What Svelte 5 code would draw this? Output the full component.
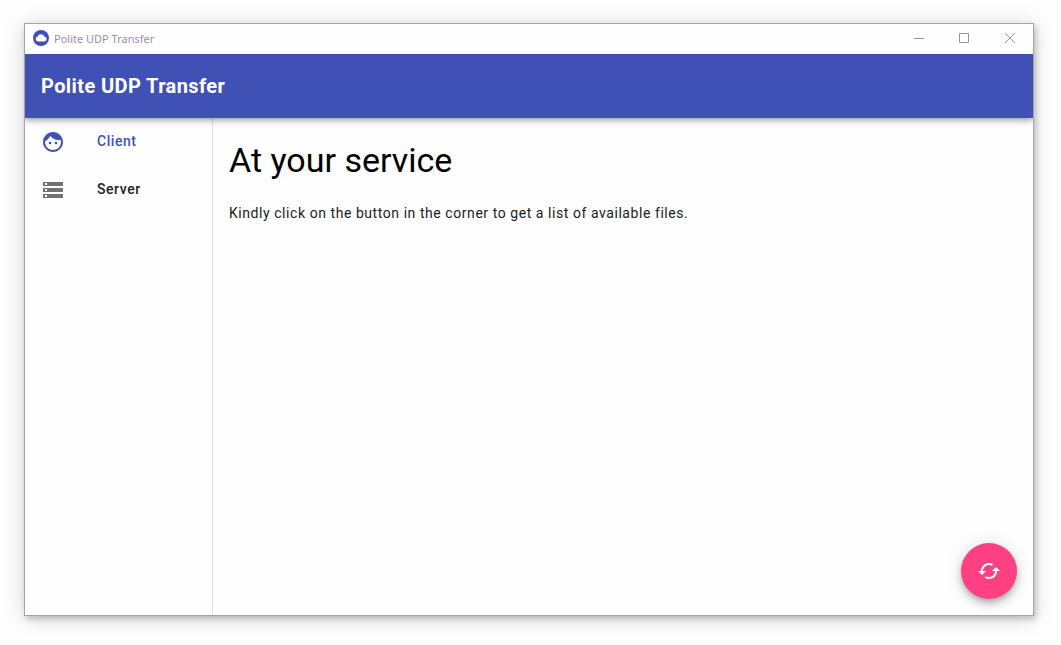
<script>
  let selected = $state('Client');

  const items = [
    {
      name: 'Client',
      icon: 'M9 11.75c-.69 0-1.25.56-1.25 1.25s.56 1.25 1.25 1.25 1.25-.56 1.25-1.25-.56-1.25-1.25-1.25zm6 0c-.69 0-1.25.56-1.25 1.25s.56 1.25 1.25 1.25 1.25-.56 1.25-1.25-.56-1.25-1.25-1.25zM12 2C6.48 2 2 6.48 2 12s4.48 10 10 10 10-4.48 10-10S17.52 2 12 2zm0 18c-4.41 0-8-3.59-8-8 0-.29.02-.58.05-.86 2.36-1.05 4.23-2.98 5.21-5.37C11.07 8.33 14.05 10 17.42 10c.78 0 1.53-.09 2.25-.26.21.71.33 1.47.33 2.26 0 4.41-3.59 8-8 8z',
    },
    {
      name: 'Server',
      icon: 'M2 20h20v-4H2v4zm2-3h2v2H4v-2zM2 4v4h20V4H2zm4 3H4V5h2v2zm-4 7h20v-4H2v4zm2-3h2v2H4v-2z',
    },
  ];
</script>

<div class="desktop">
  <div class="window">
    <div class="titlebar">
      <svg class="logo" viewBox="0 0 16 16" aria-hidden="true">
        <circle cx="8" cy="8" r="8" fill="#3f51b5" />
        <path fill="#fff" d="M5 11.5a2.6 2.6 0 0 1-.4-5.1A3.8 3.8 0 0 1 11.6 6.8a2.4 2.4 0 0 1 .1 4.7z" />
      </svg>
      <span class="caption">Polite UDP Transfer</span>
      <button class="control" aria-label="Minimize">
        <svg viewBox="0 0 10 10"><path d="M1 4.5h10" /></svg>
      </button>
      <button class="control" aria-label="Maximize">
        <svg viewBox="0 0 10 10"><path d="M.5 -.5h9v9h-9z" /></svg>
      </button>
      <button class="control" aria-label="Close">
        <svg viewBox="0 0 10 10"><path d="M0 -1l10 10M10 -1L0 9" /></svg>
      </button>
    </div>

    <header class="appbar">
      <span class="brand">Polite UDP Transfer</span>
    </header>

    <div class="body">
      <nav class="drawer">
        {#each items as item}
          <button
            class="item"
            class:active={selected === item.name}
            aria-pressed={selected === item.name}
            onclick={() => (selected = item.name)}
          >
            <svg class="icon" viewBox="0 0 24 24" aria-hidden="true"><path d={item.icon} /></svg>
            <span class="label">{item.name}</span>
          </button>
        {/each}
      </nav>

      <main class="content">
        <h1>At your service</h1>
        <p>Kindly click on the button in the corner to get a list of available files.</p>
        <button class="fab" aria-label="Refresh file list">
          <svg class="icon" viewBox="0 0 24 24" aria-hidden="true">
            <path d="M19 8l-4 4h3c0 3.31-2.69 6-6 6-1.01 0-1.97-.25-2.8-.7l-1.46 1.46C8.97 19.54 10.43 20 12 20c4.42 0 8-3.58 8-8h3l-4-4zM6 12c0-3.31 2.69-6 6-6 1.01 0 1.97.25 2.8.7l1.46-1.46C15.03 4.46 13.57 4 12 4c-4.42 0-8 3.58-8 8H1l4 4 4-4H6z" />
          </svg>
        </button>
      </main>
    </div>
  </div>
</div>

<style>
  :global(body) {
    background: #fefefe;
  }

  .desktop {
    box-sizing: border-box;
    display: flex;
    min-height: 100vh;
    padding: 23px 27px 29px 24px;
    font-family: Roboto, sans-serif;
  }

  .window {
    flex: 1;
    display: flex;
    flex-direction: column;
    background: #fefefe;
    border: 1px solid #a5a5a5;
    box-shadow:
      0 2px 20px rgba(0, 0, 0, 0.16),
      2px 3px 6px rgba(0, 0, 0, 0.2);
  }

  button {
    border: 0;
    padding: 0;
    background: none;
    font: inherit;
    cursor: pointer;
  }

  .titlebar {
    display: flex;
    align-items: center;
    height: 30px;
    padding-left: 8px;
  }

  .logo {
    width: 16px;
    height: 16px;
    margin-bottom: 2px;
  }

  .caption {
    flex: 1;
    margin-left: 5px;
    font: 11px/16px 'Noto Sans', sans-serif;
    color: #9b90a2;
  }

  .control {
    display: flex;
    align-items: center;
    justify-content: center;
    width: 46px;
    height: 28px;
  }

  .control svg {
    width: 10px;
    height: 10px;
    overflow: visible;
    fill: none;
    stroke: #969599;
    stroke-width: 1;
  }

  .appbar {
    position: relative;
    z-index: 1;
    display: flex;
    align-items: center;
    height: 64px;
    padding: 0 16px;
    background: #3f51b5;
    color: #fff;
    box-shadow:
      0 2px 4px -1px rgba(0, 0, 0, 0.2),
      0 4px 5px 0 rgba(0, 0, 0, 0.14),
      0 1px 10px 0 rgba(0, 0, 0, 0.12);
    clip-path: inset(0 0 -16px 0);
  }

  .brand {
    font-size: 20px;
    line-height: 32px;
    font-weight: 700;
    letter-spacing: 0.02em;
  }

  .body {
    flex: 1;
    display: flex;
  }

  .drawer {
    box-sizing: border-box;
    width: 188px;
    border-right: 1px solid #e0e0e0;
  }

  .item {
    display: flex;
    align-items: center;
    gap: 32px;
    width: 100%;
    height: 48px;
    padding: 0 16px;
    font-size: 14px;
    line-height: 20px;
    font-weight: 500;
    letter-spacing: 0.04em;
    color: #212121;
  }

  .label {
    padding-bottom: 2px;
  }

  .icon {
    width: 24px;
    height: 24px;
    fill: currentColor;
  }

  .item .icon {
    fill: #727272;
  }

  .item.active,
  .item.active .icon {
    color: #3f51b5;
    fill: #3f51b5;
  }

  .content {
    position: relative;
    flex: 1;
    padding: 22px 16px;
  }

  h1 {
    margin: 0;
    font-size: 34px;
    line-height: 40px;
    font-weight: 400;
    color: #000;
  }

  p {
    margin: 23px 0 0;
    font-size: 14px;
    line-height: 20px;
    letter-spacing: 0.04em;
    color: #212121;
  }

  .fab {
    position: absolute;
    right: 16px;
    bottom: 16px;
    display: flex;
    align-items: center;
    justify-content: center;
    width: 56px;
    height: 56px;
    border-radius: 50%;
    background: #ff4081;
    color: #fff;
    box-shadow:
      0 3px 5px -1px rgba(0, 0, 0, 0.2),
      0 6px 10px 0 rgba(0, 0, 0, 0.14),
      0 1px 18px 0 rgba(0, 0, 0, 0.12);
  }
</style>
